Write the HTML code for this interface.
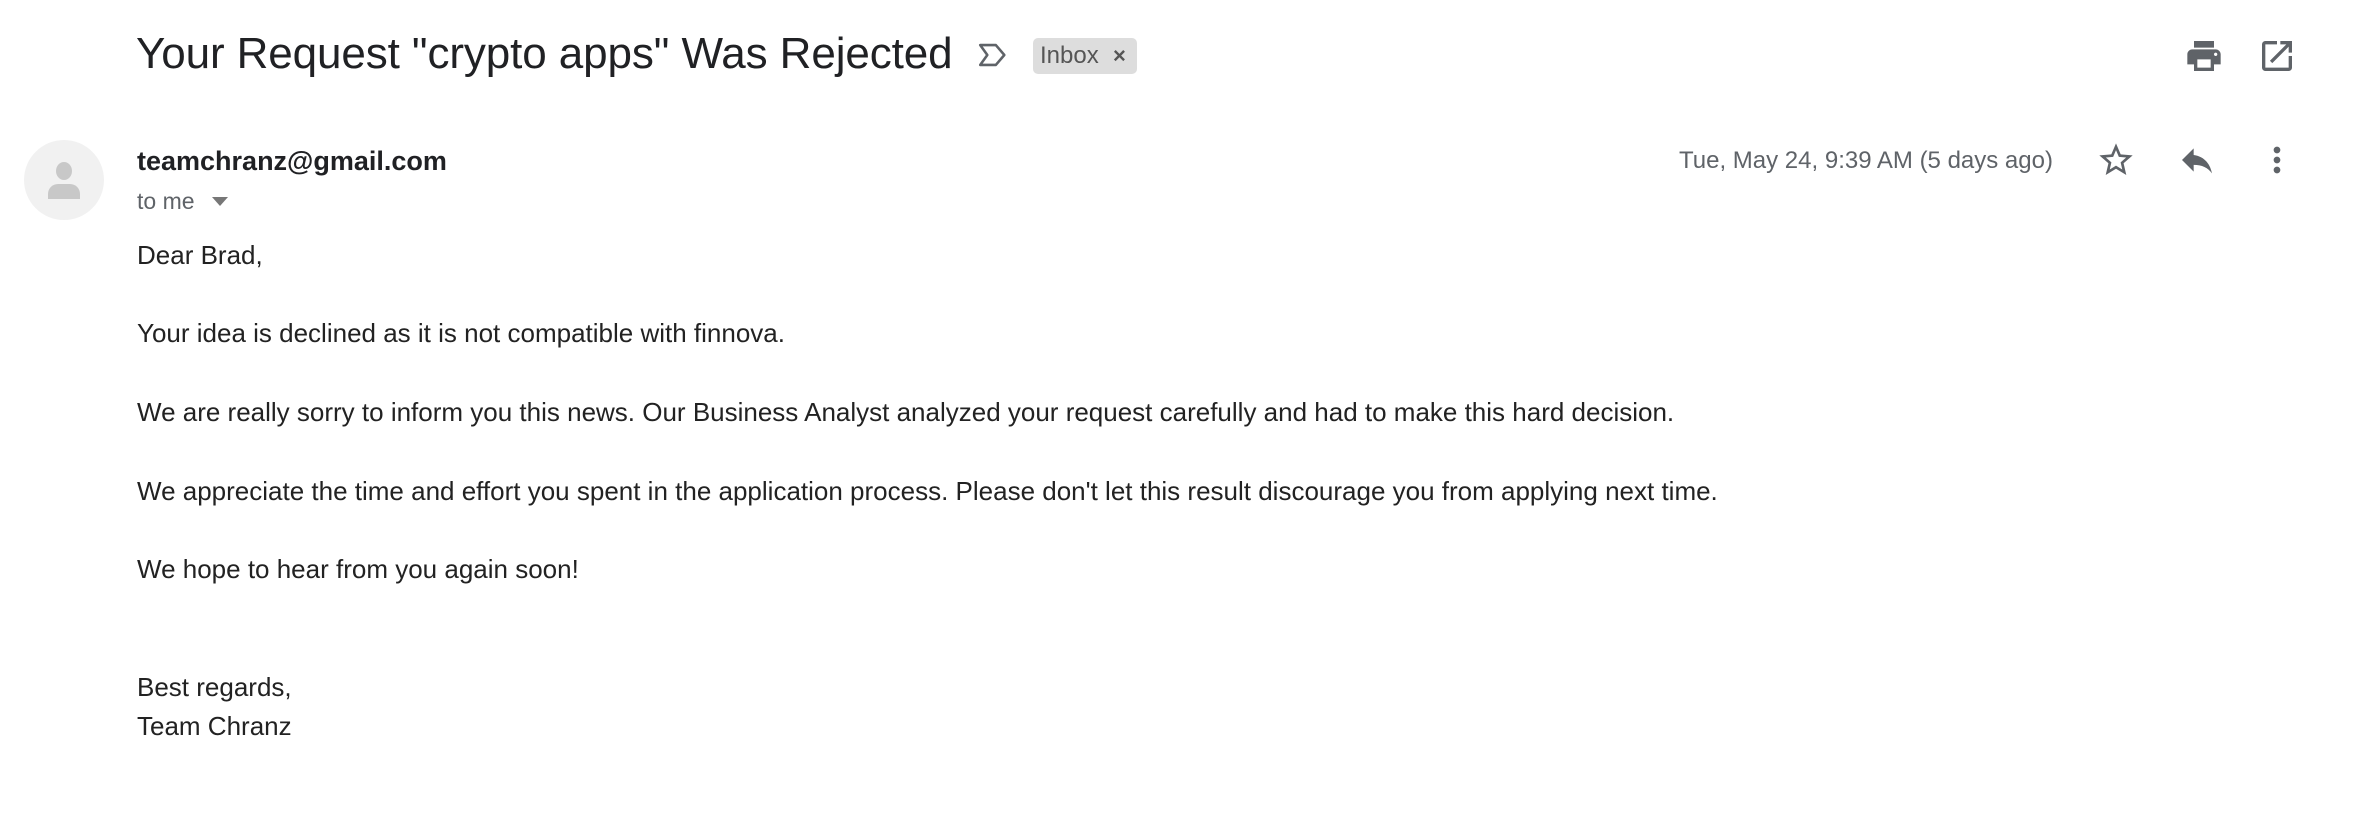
<!DOCTYPE html>
<html><head><meta charset="utf-8"><style>
html,body{margin:0;padding:0;background:#fff;width:2360px;height:816px;overflow:hidden;position:relative}
.a{position:absolute;white-space:nowrap}
.t{font-family:"Liberation Sans",Arial,sans-serif;color:#222}
.body{left:137px;font-size:26px;line-height:39px;font-family:"Liberation Sans",Arial,sans-serif;color:#222}
</style></head><body>
<div class="a t" style="left:136px;top:26px;font-size:44px;line-height:56px;color:#202124;letter-spacing:-0.1px">Your Request "crypto apps" Was Rejected</div>
<svg class="a" style="left:976px;top:38px" width="34" height="34" viewBox="0 0 24 24"><path d="M3 5h11l6 7-6 7H3l5-7z" fill="none" stroke="#5f6368" stroke-width="1.8" stroke-linejoin="round"/></svg>
<div class="a t" style="left:1033px;top:38px;width:104px;height:36px;background:#ddd;border-radius:5px;font-size:24px;line-height:36px;color:#555"><span style="margin-left:7px">Inbox</span><span style="position:absolute;left:80px;top:0;font-weight:bold;font-size:22px">×</span></div>
<svg class="a" style="left:2184px;top:36px" width="40" height="40" viewBox="0 0 24 24"><path fill="#5f6368" d="M19 8H5c-1.66 0-3 1.34-3 3v6h4v4h12v-4h4v-6c0-1.66-1.34-3-3-3zm-3 11H8v-5h8v5zm3-7c-.55 0-1-.45-1-1s.45-1 1-1 1 .45 1 1-.45 1-1 1zm-1-9H6v4h12V3z"/></svg>
<svg class="a" style="left:2257px;top:36px" width="40" height="40" viewBox="0 0 24 24"><path fill="#5f6368" d="M19 19H5V5h7V3H5a2 2 0 00-2 2v14a2 2 0 002 2h14c1.1 0 2-.9 2-2v-7h-2v7zM14 3v2h3.59l-9.83 9.83 1.41 1.41L19 6.41V10h2V3h-7z"/></svg>
<div class="a" style="left:24px;top:140px;width:80px;height:80px;border-radius:50%;background:#f1f1f1;overflow:hidden">
<div class="a" style="left:32px;top:22px;width:16px;height:18px;border-radius:50%;background:#c8c8c8"></div>
<div class="a" style="left:24px;top:44px;width:32px;height:15px;border-radius:10px 10px 0 0;background:#c8c8c8"></div></div>
<div class="a t" style="left:137px;top:144px;font-size:27px;line-height:34px;font-weight:bold;color:#202124">teamchranz@gmail.com</div>
<div class="a t" style="left:137px;top:187px;font-size:23px;line-height:28px;color:#5f6368">to me</div>
<div class="a" style="left:212px;top:197px;width:0;height:0;border-left:8px solid transparent;border-right:8px solid transparent;border-top:9px solid #777"></div>
<div class="a t" style="left:1679px;top:146px;font-size:24px;line-height:30px;color:#5f6368">Tue, May 24, 9:39 AM (5 days ago)</div>
<svg class="a" style="left:2096px;top:140px" width="40" height="40" viewBox="0 0 24 24"><path fill="#5f6368" d="M22 9.24l-7.19-.62L12 2 9.19 8.63 2 9.24l5.46 4.73L5.82 21 12 17.27 18.18 21l-1.63-7.03L22 9.24zM12 15.4l-3.76 2.27 1-4.28-3.32-2.88 4.38-.38L12 6.1l1.71 4.04 4.38.38-3.32 2.88 1 4.28L12 15.4z"/></svg>
<svg class="a" style="left:2177px;top:140px" width="40" height="40" viewBox="0 0 24 24"><path fill="#5f6368" d="M10 9V5l-7 7 7 7v-4.1c5 0 8.5 1.6 11 5.1-1-5-4-10-11-11z"/></svg>
<svg class="a" style="left:2257px;top:140px" width="40" height="40" viewBox="0 0 24 24"><path fill="#5f6368" d="M12 8c1.1 0 2-.9 2-2s-.9-2-2-2-2 .9-2 2 .9 2 2 2zm0 2c-1.1 0-2 .9-2 2s.9 2 2 2 2-.9 2-2-.9-2-2-2zm0 6c-1.1 0-2 .9-2 2s.9 2 2 2 2-.9 2-2-.9-2-2-2z"/></svg>
<div class="a body" style="top:236px">Dear Brad,</div>
<div class="a body" style="top:314px">Your idea is declined as it is not compatible with finnova.</div>
<div class="a body" style="top:393px">We are really sorry to inform you this news. Our Business Analyst analyzed your request carefully and had to make this hard decision.</div>
<div class="a body" style="top:472px">We appreciate the time and effort you spent in the application process. Please don't let this result discourage you from applying next time.</div>
<div class="a body" style="top:550px">We hope to hear from you again soon!</div>
<div class="a body" style="top:668px">Best regards,</div>
<div class="a body" style="top:707px">Team Chranz</div>
</body></html>
